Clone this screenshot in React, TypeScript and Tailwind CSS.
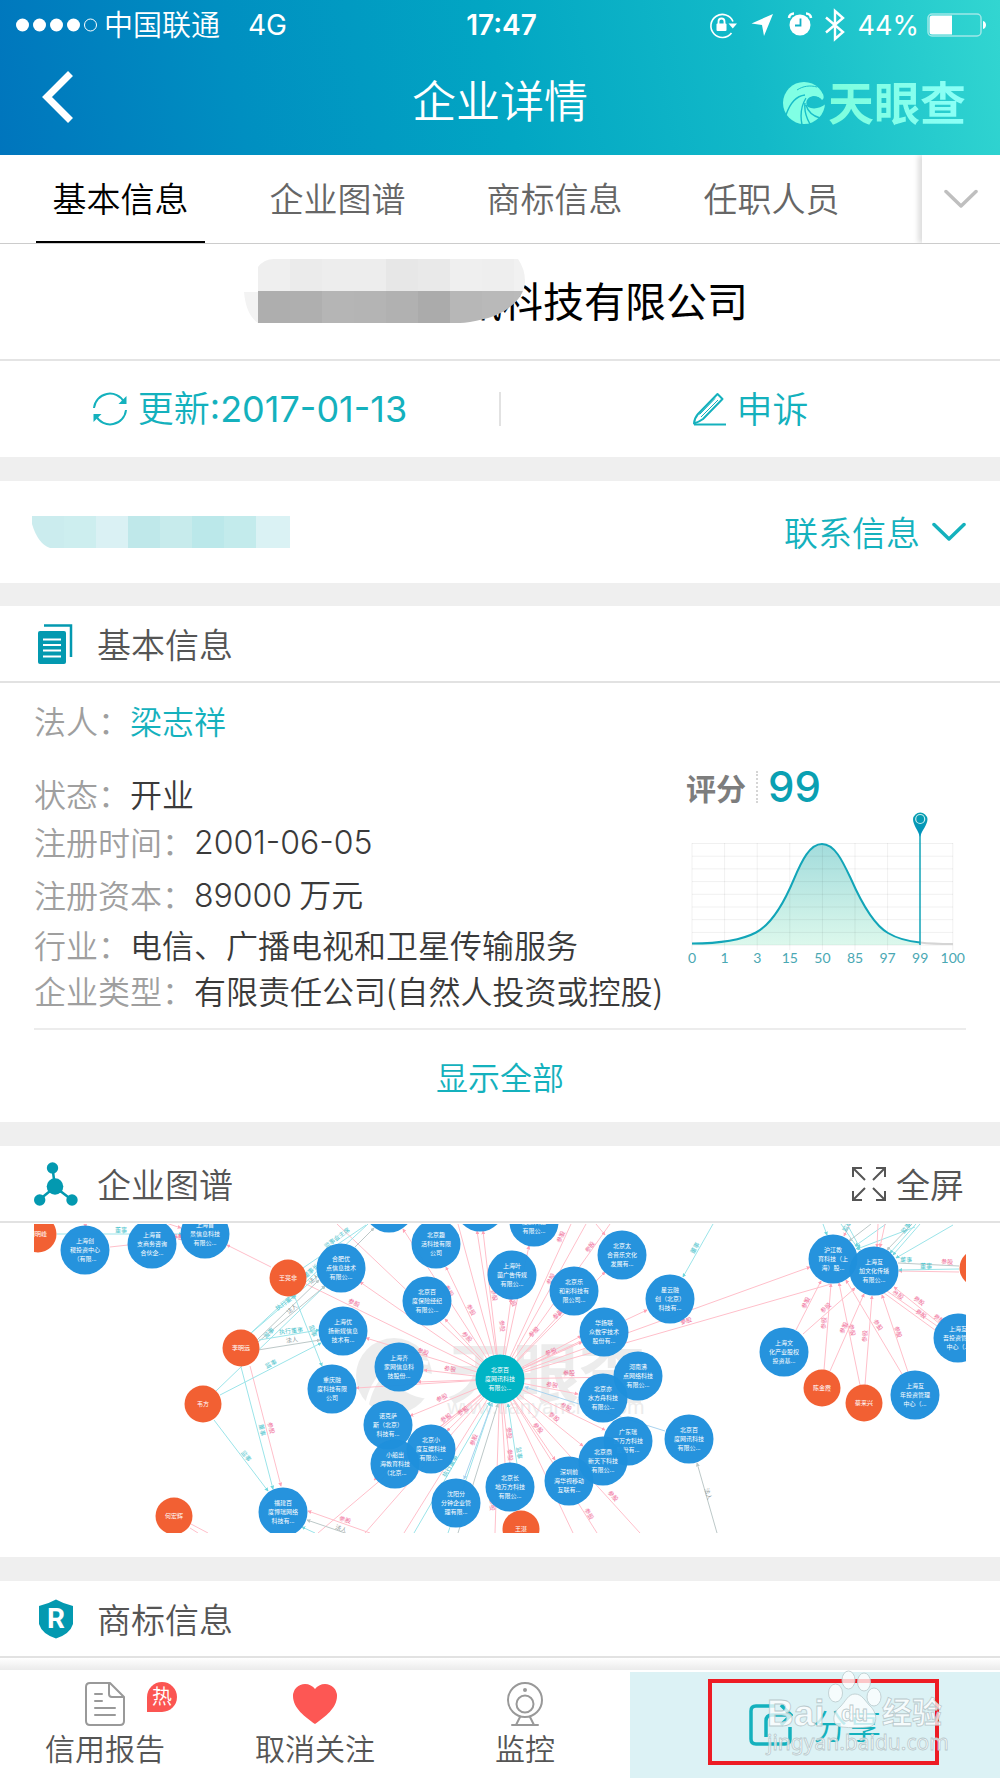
import React from "react";

type Tone = "pink" | "cyan" | "gray" | "blue";

const LINE: Record<Tone, string> = { pink: "#ffbfca", cyan: "#9be4e9", gray: "#bcc8c8", blue: "#a9d3ef" };
const LABEL: Record<Tone, string> = { pink: "#ef6c98", cyan: "#4cc4cd", gray: "#8f9b9b", blue: "#6fb1de" };

const companies: [number, number, string[]][] = [
  [85, 1251, ["上海创", "稷投资中心", "（有限..."]],
  [152, 1245, ["上海首", "支商务咨询", "合伙企..."]],
  [205, 1235, ["上海首", "景信息科技", "有限公..."]],
  [283, 1513, ["福建百", "度博瑞网络", "科技有..."]],
  [341, 1269, ["合肥优", "点信息技术", "有限公..."]],
  [343, 1332, ["上海优", "扬新媒信息", "技术有..."]],
  [332, 1390, ["重庆融", "度科技有限", "公司"]],
  [389, 1209, []],
  [436, 1245, ["北京趣", "活科技有限", "公司"]],
  [480, 1208, []],
  [534, 1223, ["", "度通科技", "有限公..."]],
  [512, 1276, ["上海叶", "菌广告传媒", "有限公..."]],
  [427, 1302, ["北京百", "度保险经纪", "有限公..."]],
  [574, 1292, ["北京乐", "和彩科技有", "限公司..."]],
  [622, 1256, ["北京太", "合音乐文化", "发展有..."]],
  [670, 1300, ["星云融", "创（北京）", "科技有..."]],
  [604, 1333, ["华扬联", "众数字技术", "股份有..."]],
  [399, 1368, ["上海齐", "家网信息科", "技股份..."]],
  [638, 1377, ["河南沸", "点网络科技", "有限公..."]],
  [603, 1399, ["北京亦", "水方舟科技", "有限公..."]],
  [388, 1426, ["诺克萨", "斯（北京）", "科技有..."]],
  [395, 1465, ["小船出", "海教育科技", "（北京..."]],
  [431, 1450, ["北京小", "度互娱科技", "有限公..."]],
  [456, 1504, ["沈阳分", "分钟企业管", "理有限..."]],
  [510, 1488, ["北京长", "地万方科技", "有限公..."]],
  [569, 1482, ["深圳前", "海华视移动", "互联有..."]],
  [628, 1442, ["广东瑞", "百万方科技", "股份有..."]],
  [603, 1462, ["北京鼎", "新天下科技", "有限公..."]],
  [689, 1440, ["北京百", "度网讯科技", "有限公..."]],
  [833, 1260, ["沪江教", "育科技（上", "海）股..."]],
  [874, 1272, ["上海互", "加文化传播", "有限公..."]],
  [784, 1353, ["上海文", "化产业股权", "投资基..."]],
  [915, 1396, ["上海互", "年投资管理", "中心（..."]],
  [958, 1339, ["上海互", "吾投资管理", "中心（..."]],
];

const people: [number, number, string][] = [
  [38, 1235, "胡明峰"],
  [288, 1279, "王亮非"],
  [241, 1349, "李明远"],
  [203, 1405, "韦方"],
  [174, 1517, "何宏辉"],
  [521, 1530, "王湛"],
  [822, 1389, "陈金霞"],
  [864, 1404, "蔡来兴"],
  [978, 1269, ""],
];

/* x1, y1, x2, y2, tone, arrow at the end */
const edges: [number, number, number, number, Tone, boolean][] = [
  [500, 1380, 360, 1283, "pink", true],
  [500, 1380, 403, 1230, "pink", true],
  [500, 1380, 337, 1225, "pink", false],
  [500, 1380, 446, 1268, "pink", true],
  [500, 1380, 445, 1320, "pink", true],
  [500, 1380, 458, 1225, "pink", false],
  [500, 1380, 477, 1232, "pink", true],
  [500, 1380, 483, 1232, "pink", true],
  [500, 1380, 529, 1247, "pink", true],
  [500, 1380, 511, 1300, "pink", true],
  [500, 1380, 571, 1225, "pink", false],
  [500, 1380, 586, 1225, "pink", false],
  [500, 1380, 610, 1225, "pink", false],
  [596, 1225, 605, 1236, "pink", true],
  [500, 1380, 605, 1273, "pink", true],
  [500, 1380, 561, 1314, "pink", true],
  [500, 1380, 582, 1343, "pink", true],
  [500, 1380, 581, 1337, "pink", true],
  [500, 1380, 647, 1311, "pink", true],
  [500, 1380, 810, 1268, "pink", true],
  [500, 1380, 831, 1285, "pink", false],
  [500, 1380, 366, 1339, "pink", true],
  [500, 1380, 304, 1284, "pink", false],
  [500, 1380, 424, 1371, "pink", true],
  [500, 1380, 418, 1383, "pink", true],
  [500, 1380, 356, 1389, "pink", true],
  [500, 1380, 410, 1417, "pink", true],
  [500, 1380, 447, 1432, "pink", true],
  [500, 1380, 437, 1430, "pink", false],
  [500, 1380, 374, 1481, "pink", true],
  [500, 1380, 318, 1534, "pink", false],
  [500, 1380, 365, 1534, "pink", false],
  [500, 1380, 404, 1534, "pink", false],
  [500, 1380, 495, 1534, "pink", false],
  [500, 1380, 505, 1464, "pink", false],
  [500, 1380, 510, 1464, "pink", false],
  [500, 1380, 555, 1461, "pink", true],
  [500, 1380, 573, 1534, "pink", false],
  [500, 1380, 597, 1534, "pink", false],
  [500, 1380, 640, 1534, "pink", false],
  [500, 1380, 583, 1447, "pink", true],
  [500, 1380, 605, 1431, "pink", true],
  [500, 1380, 578, 1395, "pink", true],
  [500, 1380, 616, 1378, "pink", false],
  [414, 1534, 490, 1403, "cyan", true],
  [448, 1534, 492, 1404, "cyan", true],
  [492, 1404, 464, 1480, "blue", true],
  [458, 1534, 498, 1405, "gray", true],
  [517, 1465, 508, 1405, "cyan", true],
  [665, 1432, 525, 1388, "blue", true],
  [57, 1235, 182, 1235, "cyan", true],
  [110, 1248, 128, 1246, "pink", false],
  [85, 1224, 86, 1228, "pink", true],
  [166, 1224, 181, 1229, "pink", true],
  [174, 1240, 182, 1236, "pink", true],
  [271, 1268, 227, 1246, "pink", true],
  [250, 1367, 281, 1487, "pink", true],
  [241, 1368, 273, 1490, "cyan", true],
  [214, 1421, 268, 1492, "cyan", true],
  [216, 1392, 325, 1287, "cyan", true],
  [220, 1396, 321, 1344, "cyan", true],
  [250, 1335, 320, 1275, "cyan", true],
  [252, 1333, 368, 1225, "cyan", false],
  [303, 1269, 366, 1226, "cyan", false],
  [257, 1341, 319, 1281, "gray", true],
  [258, 1343, 325, 1287, "gray", true],
  [258, 1351, 320, 1341, "gray", true],
  [259, 1341, 319, 1331, "cyan", true],
  [294, 1296, 322, 1367, "cyan", true],
  [355, 1248, 374, 1229, "gray", true],
  [191, 1525, 208, 1534, "pink", false],
  [190, 1529, 198, 1534, "pink", false],
  [370, 1534, 308, 1512, "pink", true],
  [345, 1534, 307, 1521, "gray", true],
  [315, 1534, 302, 1528, "cyan", true],
  [713, 1225, 683, 1278, "cyan", true],
  [796, 1331, 821, 1282, "pink", true],
  [803, 1335, 855, 1289, "pink", true],
  [824, 1371, 831, 1285, "pink", true],
  [830, 1372, 864, 1295, "pink", true],
  [860, 1386, 839, 1284, "pink", true],
  [865, 1386, 872, 1297, "pink", true],
  [908, 1373, 882, 1296, "pink", true],
  [902, 1375, 846, 1281, "pink", true],
  [940, 1325, 894, 1288, "pink", true],
  [937, 1327, 887, 1292, "pink", false],
  [935, 1331, 884, 1294, "pink", false],
  [959, 1273, 899, 1272, "pink", true],
  [959, 1267, 898, 1264, "gray", false],
  [959, 1270, 899, 1271, "cyan", true],
  [823, 1225, 827, 1236, "cyan", true],
  [841, 1225, 859, 1251, "cyan", true],
  [847, 1225, 860, 1249, "cyan", true],
  [850, 1225, 844, 1237, "pink", true],
  [871, 1225, 849, 1242, "gray", true],
  [886, 1225, 855, 1247, "cyan", true],
  [915, 1228, 857, 1250, "cyan", true],
  [878, 1225, 877, 1248, "pink", true],
  [885, 1225, 880, 1248, "pink", true],
  [912, 1225, 887, 1251, "gray", true],
  [916, 1225, 890, 1254, "cyan", true],
  [920, 1225, 893, 1256, "cyan", true],
  [953, 1226, 896, 1259, "cyan", true],
  [717, 1534, 697, 1464, "gray", true],
];

/* x, y, rotation, text, tone */
const labels: [number, number, number, string, Tone][] = [
  [354, 1304, 25, "参股", "pink"],
  [471, 1311, 60, "参股", "pink"],
  [467, 1338, 45, "参股", "pink"],
  [423, 1353, 20, "参股", "pink"],
  [450, 1370, 8, "参股", "pink"],
  [442, 1399, -25, "参股", "pink"],
  [446, 1419, -35, "参股", "pink"],
  [463, 1412, -35, "参股", "pink"],
  [474, 1441, -70, "参股", "pink"],
  [509, 1434, 86, "参股", "pink"],
  [510, 1456, 86, "参股", "pink"],
  [538, 1429, 50, "参股", "pink"],
  [554, 1418, 40, "参股", "pink"],
  [566, 1408, 28, "参股", "pink"],
  [552, 1386, 8, "参股", "pink"],
  [569, 1374, 0, "参股", "pink"],
  [551, 1353, -22, "参股", "pink"],
  [534, 1333, -45, "参股", "pink"],
  [558, 1315, -45, "参股", "pink"],
  [551, 1280, -62, "参股", "pink"],
  [561, 1238, -65, "参股", "pink"],
  [590, 1248, -55, "参股", "pink"],
  [502, 1327, 86, "参股", "pink"],
  [512, 1302, 60, "参股", "pink"],
  [494, 1296, 78, "参股", "pink"],
  [449, 1292, 60, "参股", "pink"],
  [613, 1497, 50, "参股", "pink"],
  [589, 1515, 60, "参股", "pink"],
  [492, 1506, 88, "参股", "pink"],
  [345, 1521, 15, "参股", "pink"],
  [341, 1530, 20, "法人", "gray"],
  [519, 1454, 82, "监事", "cyan"],
  [450, 1467, -60, "执行董事", "cyan"],
  [286, 1303, -37, "执行董事", "cyan"],
  [292, 1310, -40, "法人", "gray"],
  [269, 1334, -42, "监事", "cyan"],
  [291, 1332, -6, "执行董事", "cyan"],
  [292, 1341, -8, "法人", "gray"],
  [313, 1332, 70, "监事", "cyan"],
  [271, 1365, -27, "监事", "cyan"],
  [246, 1457, 53, "监事", "cyan"],
  [262, 1431, 78, "董事", "cyan"],
  [271, 1429, 76, "参股", "pink"],
  [121, 1231, 0, "董事", "cyan"],
  [178, 1238, 0, "参股", "pink"],
  [311, 1272, -42, "董事长", "cyan"],
  [314, 1280, -40, "法人", "gray"],
  [337, 1239, -37, "监事会主席", "cyan"],
  [695, 1249, -60, "董事", "cyan"],
  [686, 1322, -15, "参股", "pink"],
  [806, 1304, -65, "参股", "pink"],
  [826, 1309, -42, "参股", "pink"],
  [824, 1324, -86, "参股", "pink"],
  [844, 1329, -65, "参股", "pink"],
  [852, 1331, 78, "参股", "pink"],
  [865, 1337, -86, "参股", "pink"],
  [878, 1326, 58, "参股", "pink"],
  [898, 1333, 72, "参股", "pink"],
  [898, 1296, 33, "参股", "pink"],
  [919, 1302, 36, "参股", "pink"],
  [921, 1315, 36, "参股", "pink"],
  [939, 1320, 36, "参股", "pink"],
  [906, 1261, 2, "董事", "cyan"],
  [926, 1267, 0, "董事", "cyan"],
  [947, 1263, 2, "参股", "pink"],
  [906, 1229, -50, "监事", "cyan"],
  [847, 1227, -60, "监事", "cyan"],
  [708, 1495, 72, "法人", "gray"],
];

function NodeText({ x, y, lines }: { x: number; y: number; lines: string[] }) {
  return (
    <>
      {lines.map((t, i) => (
        <text key={i} x={x} y={y - 7 + i * 9.2} fontSize="6" fill="#fff" textAnchor="middle">
          {t}
        </text>
      ))}
    </>
  );
}

function RelationGraph() {
  return (
    <svg viewBox="34 1225 932 309" className="block w-full font-normal" role="img" aria-label="企业图谱">
      <defs>
        {(Object.keys(LINE) as Tone[]).map((t) => (
          <marker key={t} id={"arrow-" + t} viewBox="0 0 6 6" refX="5" refY="3" markerWidth="4" markerHeight="4" orient="auto">
            <path d="M0 0L6 3L0 6z" fill={t === "pink" ? "#ffa3b6" : t === "cyan" ? "#6fd6de" : LINE[t]} />
          </marker>
        ))}
        <mask id="swirl">
          <circle cx="394" cy="1377" r="38" fill="#fff" />
          <path d="M366 1410C372 1376 394 1356 428 1364" stroke="#000" strokeWidth="4" fill="none" />
          <path d="M397 1382C396 1368 408 1362 420 1372L436 1376L436 1400C416 1400 402 1394 397 1382z" fill="#000" />
        </mask>
      </defs>
      <g fill="#ececec">
        <rect x="354" y="1337" width="80" height="80" mask="url(#swirl)" />
        <text x="546" y="1399" fontSize="66" fontWeight="700" textAnchor="middle">天眼查</text>
        <text x="546" y="1415" fontSize="21" fontFamily="Liberation Sans, sans-serif" textAnchor="middle">www.tianyancha.com</text>
      </g>
      {edges.map(([x1, y1, x2, y2, tone, arrow], i) => (
        <line key={i} x1={x1} y1={y1} x2={x2} y2={y2} stroke={LINE[tone]} strokeWidth="1" markerEnd={arrow ? `url(#arrow-${tone})` : undefined} />
      ))}
      {labels.map(([x, y, r, t, tone], i) => (
        <text key={i} x={x} y={y + 2} fontSize="6" fill={LABEL[tone]} textAnchor="middle" transform={`rotate(${r} ${x} ${y})`}>
          {t}
        </text>
      ))}
      {companies.map(([x, y, lines], i) => (
        <g key={i}>
          <circle cx={x} cy={y} r="24.5" fill="#1f90dc" fillOpacity="0.97" />
          <NodeText x={x} y={y} lines={lines} />
        </g>
      ))}
      {people.map(([x, y, name], i) => (
        <g key={i}>
          <circle cx={x} cy={y} r="18.5" fill="#f26033" />
          <text x={x} y={y + 2} fontSize="6" fill="#fff" textAnchor="middle">{name}</text>
        </g>
      ))}
      <circle cx="500" cy="1380" r="24.5" fill="#00b4c5" />
      <NodeText x={500} y={1380} lines={["北京百", "度网讯科技", "有限公..."]} />
    </svg>
  );
}

function ScoreChart() {
  const ticks = ["0", "1", "3", "15", "50", "85", "97", "99", "100"];
  const curve =
    "M2 140.500C24 140.500 48 139 66 129.500C82 121 94 100 104 76C112 57 120 41 132 41C145 41 153 59 161 76C172 101 184 122 198 130C208 136 220 138.500 230 139.500";
  return (
    <svg viewBox="-4 0 280 166" className="block w-full overflow-visible" role="img" aria-label="评分分布">
      <defs>
        <linearGradient id="bell" x1="0" y1="0" x2="0" y2="1">
          <stop offset="0" stopColor="#a3dcdc" />
          <stop offset="1" stopColor="#dcf8ec" />
        </linearGradient>
        <linearGradient id="pin" x1="0" y1="0" x2="0" y2="1">
          <stop offset="0" stopColor="#0a9fb0" />
          <stop offset="1" stopColor="#0091bd" />
        </linearGradient>
      </defs>
      <path d={curve + "L230 142L2 142z"} fill="url(#bell)" />
      <g stroke="#000" strokeOpacity="0.06" strokeWidth="1">
        {ticks.map((_, i) => (
          <line key={i} x1={2 + i * 32.6} x2={2 + i * 32.6} y1="40" y2="147" />
        ))}
        {ticks.map((_, i) => (
          <line key={i} x1="2" x2="263" y1={40.5 + i * 12.7} y2={40.5 + i * 12.7} />
        ))}
      </g>
      <path d="M230 139.500C242 141 252 141 263 141" stroke="#d5d5d5" strokeWidth="2" fill="none" />
      <path d={curve} stroke="#12a5b8" strokeWidth="2" fill="none" />
      <line x1="230" x2="230" y1="30" y2="142" stroke="#12a5b8" strokeWidth="1.500" />
      <path d="M230 34C228 27 223 22 223 16A7.300 7.300 0 0 1 237.500 16C237.500 22 232 27 230 34z" fill="url(#pin)" />
      <circle cx="230.200" cy="16" r="4.500" fill="none" stroke="#c9edf0" strokeWidth="1.200" />
      <g fill="#4aa8b3" fontSize="14" fontWeight="400" fontFamily="Lato, sans-serif" textAnchor="middle">
        {ticks.map((t, i) => (
          <text key={t} x={2 + i * 32.6} y="160">{t}</text>
        ))}
      </g>
    </svg>
  );
}

function Chevron({ color }: { color: string }) {
  return (
    <svg viewBox="0 0 34 20" className="h-5 w-[34px] shrink-0" fill="none" stroke={color} strokeWidth="3.500" strokeLinecap="round" strokeLinejoin="round" aria-hidden="true">
      <path d="M2 2.500L17 17L32 2.500" />
    </svg>
  );
}

function StatusBar() {
  return (
    <div className="flex h-[50px] items-center pl-4 pr-[13px] text-[28px] leading-none [font-family:Inter,'Noto_Sans_CJK_SC',sans-serif]">
      <div className="flex flex-1 items-center">
        <svg viewBox="0 0 82 16" className="h-4 w-[82px]" fill="#fff" aria-hidden="true">
          <circle cx="6.500" cy="8" r="6.500" />
          <circle cx="23.500" cy="8" r="6.500" />
          <circle cx="40.500" cy="8" r="6.500" />
          <circle cx="57.500" cy="8" r="6.500" />
          <circle cx="74.500" cy="8" r="6" fill="none" stroke="#fff" strokeWidth="1" />
        </svg>
        <span className="ml-1.5 text-[29px] [font-weight:350]">中国联通</span>
        <span className="ml-7">4G</span>
      </div>
      <span className="font-semibold">17:47</span>
      <div className="flex flex-1 items-center justify-end">
        <svg viewBox="0 0 138 34" className="mr-3 h-[34px] w-[138px]" fill="#fff" aria-hidden="true">
          <path d="M23.500 25A11.500 11.500 0 1 1 25 13.500" fill="none" stroke="#fff" strokeWidth="1.600" />
          <path d="M20.500 15.500h8.500l-4.200 5z" />
          <rect x="8.500" y="15.500" width="10" height="7.500" rx="1" />
          <path d="M10.500 16v-2.500a3 3 0 0 1 6 0V16" fill="none" stroke="#fff" strokeWidth="1.800" />
          <path d="M65 6L56 28L54 17L43.500 15.500z" />
          <circle cx="92" cy="17" r="10.500" />
          <path d="M92.500 10.500v7h-5.500" fill="none" stroke="#12b0c5" strokeWidth="1.800" />
          <path d="M81 10a5 5 0 0 1 5-4.500M103 10a5 5 0 0 0-5-4.500" fill="none" stroke="#fff" strokeWidth="2.600" />
          <path d="M118 9.500L135 24L127 31V3L135 10L118 24.500" fill="none" stroke="#fff" strokeWidth="2.400" />
        </svg>
        <span className="mr-2 text-[27px]">44%</span>
        <svg viewBox="0 0 60 24" className="h-6 w-[60px]" aria-hidden="true">
          <rect x="1" y="1" width="53" height="22" rx="4" fill="none" stroke="#9fe8e8" strokeWidth="1.500" />
          <path d="M5 2.500h20v19H5a2.500 2.500 0 0 1-2.500-2.500V5A2.500 2.500 0 0 1 5 2.500z" fill="#fff" />
          <path d="M56 8c4 1 4 7 0 8z" fill="#fff" />
        </svg>
      </div>
    </div>
  );
}

function Brand() {
  return (
    <div className="flex items-center justify-end gap-0.5 text-[#80ffe4]">
      <svg viewBox="0 0 44 44" className="h-11 w-11" aria-hidden="true">
        <defs>
          <mask id="brand">
            <circle cx="22" cy="22" r="21" fill="#fff" />
            <path d="M4 34C8 22 14 15 23 14" stroke="#000" strokeWidth="1.400" fill="none" />
            <path d="M15 9C21 5 28 4 35 6" stroke="#000" strokeWidth="1" fill="none" />
            <path d="M25 19C29 13 36 14 40 18L40 8L46 8V21C40 27 32 29 26 26C24 24 24 21 25 19z" fill="#000" />
            <path d="M20 44C18 34 19 25 24 17M28 43C24 36 22 30 23 22M38 37C31 35 26 31 24 24" stroke="#000" strokeWidth="1.400" fill="none" />
          </mask>
        </defs>
        <rect width="44" height="44" fill="currentColor" mask="url(#brand)" />
        <path d="M24 18C28 8 38 8 41 13C42 16 42 18 40 19C37 15 30 13 24 18z" fill="currentColor" />
      </svg>
      <span className="bg-linear-to-r from-[#7dfedc] to-[#8cfff8] bg-clip-text pb-1.5 text-[46px] font-bold leading-none text-transparent">天眼查</span>
    </div>
  );
}

function SectionHeader({ icon, title, children }: { icon: React.ReactNode; title: string; children?: React.ReactNode }) {
  return (
    <div className="flex h-[77px] items-center border-b-2 border-[#e2e2e2] pl-[34px] pr-9">
      <span className="flex w-[63px]">{icon}</span>
      <h2 className="flex-1 text-[34px] leading-none text-[#555]">{title}</h2>
      {children}
    </div>
  );
}

function Mosaic({ rows, width, offset, clip, className }: { rows: string[][]; width: number; offset: number; clip: string; className: string }) {
  return (
    <svg className={className} viewBox={`${offset} 0 ${width} ${rows.length * 32}`} aria-hidden="true" style={{ clipPath: clip }} shapeRendering="crispEdges">
      {rows.map((r, j) => r.map((c, i) => <rect key={i + "-" + j} x={i * 32} y={j * 32} width="32" height="32" fill={c} />))}
    </svg>
  );
}

const info: [string, string, string][] = [
  ["状态：", "开业", "h-12"],
  ["注册时间：", "2001-06-05", "h-12"],
  ["注册资本：", "89000 万元", "h-[58px]"],
  ["行业：", "电信、广播电视和卫星传输服务", "h-[42px]"],
  ["企业类型：", "有限责任公司(自然人投资或控股)", "h-[50px]"],
];

const tabs = ["基本信息", "企业图谱", "商标信息", "任职人员"];

export default function App() {
  return (
    <div className="flex min-h-screen flex-col bg-[#efefef] [font-family:'Noto_Sans_CJK_SC',sans-serif] [font-weight:350]">
      <header className="h-[155px] bg-[linear-gradient(78deg,#0075bd_0%,#008fc1_24%,#02a6c3_50%,#12b9c8_74%,#32d6d1_100%)] font-normal text-white">
        <StatusBar />
        <div className="grid h-[105px] grid-cols-[1fr_auto_1fr] items-center px-[34px]">
          <button type="button" aria-label="返回" className="ml-2 w-8">
            <svg viewBox="0 0 32 52" className="-mt-3 h-[52px] w-8" fill="none" stroke="#fff" strokeWidth="7" aria-hidden="true">
              <path d="M28.500 2.500L5 26L28.500 49.500" />
            </svg>
          </button>
          <h1 className="pb-2 text-[44px] leading-none [font-weight:350]">企业详情</h1>
          <Brand />
        </div>
      </header>

      <nav className="flex h-[89px] border-b border-[#ccc] bg-white">
        <div className="flex flex-1 pl-3 pr-[42px]">
          {tabs.map((t, i) => (
            <button
              key={t}
              type="button"
              className={
                i === 0
                  ? "mx-6 flex-1 whitespace-nowrap border-b-2 border-black text-[34px] leading-none text-black"
                  : "mx-6 flex-1 whitespace-nowrap border-b-2 border-transparent text-[34px] leading-none text-[#666]"
              }
            >
              {t}
            </button>
          ))}
        </div>
        <button type="button" aria-label="更多" className="flex w-[78px] items-center justify-center shadow-[-4px_0_5px_rgba(0,0,0,0.13)] [clip-path:inset(0_0_0_-10px)]">
          <Chevron color="#bfbfbf" />
        </button>
      </nav>

      <section className="bg-white">
        <div className="flex h-[117px] items-center justify-center border-b-2 border-[#e4e4e4]">
          <div className="relative flex w-[512px] justify-end pb-1 pr-2">
            <span className="text-[41px] font-normal leading-none text-black">讯科技有限公司</span>
            <Mosaic
              className="absolute -top-5 left-0 h-16 w-[281px]"
              width={281}
              offset={18}
              clip="path('M0 33H14V8Q20 0 30 0H274Q281 10 281 22C281 42 258 56 240 60Q224 64 216 64H14Q2 56 0 33Z')"
              rows={[
                ["#ffffff", "#efefef", "#ebebeb", "#ededed", "#ededed", "#e7e7e7", "#e9e9e9", "#efefef", "#eeeeee", "#f1f1f1"],
                ["#f3f3f3", "#aeaeae", "#afafaf", "#b5b5b5", "#b4b4b4", "#b1b1b1", "#ababab", "#b7b7b7", "#b9b9b9", "#bababa"],
              ]}
            />
          </div>
        </div>
        <div className="flex h-24 items-center text-4xl leading-none text-[#14b1bd]">
          <button type="button" className="flex flex-1 items-center justify-center gap-2.5">
            <svg viewBox="0 0 36 36" className="h-9 w-9" fill="none" stroke="currentColor" strokeWidth="2" aria-hidden="true">
              <path d="M2 17A16 16 0 0 1 32 11M34 19A16 16 0 0 1 4 25" />
              <path d="M34.500 5v8h-8zM1.500 31v-8h8z" fill="currentColor" stroke="none" />
            </svg>
            <span className="pb-1">
              更新<span className="font-normal [font-family:Inter,sans-serif]">:2017-01-13</span>
            </span>
          </button>
          <span className="h-[34px] w-0.5 bg-[#e2e2e2]" />
          <button type="button" className="flex flex-1 items-center justify-center gap-2.5">
            <svg viewBox="0 0 34 34" className="h-[34px] w-[34px]" fill="none" stroke="currentColor" strokeWidth="2" strokeLinejoin="round" aria-hidden="true">
              <path d="M25.500 2L30.500 7L11 27Q7 30 2 31.500Q2.500 26 6 22z" />
              <path d="M26 8L9 25M23 6.500L7.500 22.500" strokeWidth="1" />
              <path d="M2 32.500H34" />
            </svg>
            <span className="pb-1">申诉</span>
          </button>
        </div>
      </section>

      <section className="mt-6 flex h-[102px] items-center justify-between bg-white pl-8 pr-[34px]">
        <Mosaic
          className="h-8 w-[258px]"
          width={258}
          offset={0}
          clip="path('M0 0H258V32H18Q6 28 0 8Z')"
          rows={[["#cbecee", "#cdeeef", "#daf1f4", "#bfe8ea", "#c7ebec", "#bbe8ea", "#c3ebec", "#daf2f4", "#daf2f4"]]}
        />
        <button type="button" className="flex items-center gap-3 text-[34px] leading-none text-[#14b1bd]">
          联系信息
          <Chevron color="#14b1bd" />
        </button>
      </section>

      <section className="mt-[23px] bg-white">
        <SectionHeader
          title="基本信息"
          icon={
            <svg viewBox="0 0 42 40" className="h-10 w-[42px]" aria-hidden="true">
              <path d="M10 1.500H37V33" fill="none" stroke="#0399b0" strokeWidth="2.500" />
              <rect x="4" y="7" width="28" height="33" rx="2" fill="#0399b0" />
              <path d="M9 15.500H27M9 21H27M9 26.500H27M9 32.500H27" stroke="#fff" strokeWidth="2" />
            </svg>
          }
        />
        <div className="px-[34px]">
          <div className="flex items-start border-b-2 border-[#ececec] pb-[13px] text-[32px] leading-none text-[#3a3a3a]">
            <dl className="flex-1 whitespace-nowrap">
              <div className="mb-3 flex h-[74px] items-center">
                <dt className="text-[#9f9f9f]">法人：</dt>
                <dd>
                  <a href="#legal-person" className="text-[#14b1bd]">梁志祥</a>
                </dd>
              </div>
              {info.map(([label, value, height]) => (
                <div key={label} className={"flex items-center " + height}>
                  <dt className="text-[#9f9f9f]">{label}</dt>
                  <dd>
                    {value.split(/([0-9-]+)/).map((part, i) =>
                      i % 2 ? (
                        <span key={i} className="[font-family:Inter,sans-serif]">{part}</span>
                      ) : (
                        part
                      ),
                    )}
                  </dd>
                </div>
              ))}
            </dl>
            <div className="-ml-5 mt-[84px] w-[280px] shrink-0">
              <div className="-mb-1 flex h-10 items-center">
                <span className="text-[30px] font-bold text-[#7d7d7d]">评分</span>
                <span className="mx-2.5 h-8 border-l-2 border-dotted border-[#d5d5d5]" />
                <span className="text-[42px] font-medium text-[#0aa0b2] [font-family:Inter,sans-serif]">99</span>
              </div>
              <ScoreChart />
            </div>
          </div>
          <button type="button" className="flex h-[92px] w-full items-center justify-center text-[32px] leading-none text-[#14b1bd]">
            显示全部
          </button>
        </div>
      </section>

      <section className="mt-6 bg-white pb-6">
        <SectionHeader
          title="企业图谱"
          icon={
            <svg viewBox="0 0 44 44" className="h-11 w-11" fill="#0399b0" aria-hidden="true">
              <path d="M18.500 6L21 25L5 38M21 25L38 38" fill="none" stroke="#0399b0" strokeWidth="2.500" />
              <circle cx="18.500" cy="6" r="5.700" />
              <circle cx="21" cy="24.500" r="8.300" />
              <circle cx="5.700" cy="38" r="5.700" />
              <circle cx="38" cy="38" r="5.700" />
            </svg>
          }
        >
          <button type="button" className="flex items-center gap-2.5 text-[34px] leading-none text-[#555]">
            <svg viewBox="0 0 34 34" className="h-[34px] w-[34px]" fill="none" stroke="currentColor" strokeWidth="2" aria-hidden="true">
              <path d="M1 10V1H10M1 1L13 13M24 1H33V10M33 1L21 13M1 24V33H10M1 33L13 21M24 33H33V24M33 33L21 21" />
            </svg>
            全屏
          </button>
        </SectionHeader>
        <div className="px-[34px] pt-px">
          <RelationGraph />
        </div>
      </section>

      <section className="mt-6 flex-1 bg-white">
        <SectionHeader
          title="商标信息"
          icon={
            <span className="relative ml-1 flex h-10 w-9 items-center justify-center">
              <svg viewBox="0 0 36 40" className="absolute inset-0 h-10 w-9" fill="#0399b0" aria-hidden="true">
                <path d="M18 .5Q26 5 35 7V25Q32 35 18 39.500Q4 35 1 25V7Q10 5 18 .5z" />
              </svg>
              <span className="relative text-[28px] font-bold leading-none text-white [font-family:Roboto,sans-serif]">R</span>
            </span>
          }
        />
        <div className="h-3 bg-linear-to-b from-white to-[#ebebeb]" />
      </section>

      <footer className="sticky bottom-0 flex h-[106px] bg-white text-[#555]">
        <div className="grid w-[63%] grid-cols-3 text-[30px] leading-none">
          <button type="button" className="relative flex flex-col items-center pt-2.5">
            <svg viewBox="0 0 40 44" className="h-11 w-10" fill="none" stroke="#999" strokeWidth="2" strokeLinecap="round" strokeLinejoin="round" aria-hidden="true">
              <path d="M5 1H25L39 15V39Q39 43 35 43H5Q1 43 1 39V5Q1 1 5 1zM24 1V12Q24 15 27 15H38M10 12H17M10 19H17M10 26H30M10 33H30" />
            </svg>
            <span className="mt-1.5">信用报告</span>
            <span className="absolute left-[70%] top-2.5 flex h-[30px] w-[30px] items-center justify-center rounded-full rounded-bl-none bg-[#fb5552] pb-0.5 text-xl leading-none text-white">热</span>
          </button>
          <button type="button" className="flex flex-col items-center pt-2.5">
            <svg viewBox="0 0 44 44" className="h-11 w-11" fill="#fd5754" aria-hidden="true">
              <path d="M22 42C12 35 0 26 0 14A12 12 0 0 1 12 2C16 2 20 4 22 7C24 4 28 2 32 2A12 12 0 0 1 44 14C44 26 32 35 22 42z" />
            </svg>
            <span className="mt-1.5">取消关注</span>
          </button>
          <button type="button" className="flex flex-col items-center pt-2.5">
            <svg viewBox="0 0 38 44" className="h-11 w-[38px]" fill="none" stroke="#999" strokeWidth="2" strokeLinecap="round" aria-hidden="true">
              <circle cx="19" cy="18" r="17" />
              <circle cx="19" cy="22" r="8.500" />
              <circle cx="19" cy="8" r="1" fill="#999" />
              <path d="M14 35L10 43M24 35L28 43M6 43H32" />
            </svg>
            <span className="mt-1.5">监控</span>
          </button>
        </div>
        <div className="relative flex flex-1 items-center justify-center bg-[#dcf2f5]">
          <button type="button" className="flex items-center gap-5 text-[34px] leading-none text-[#14b1bd]">
            <svg viewBox="0 0 44 44" className="h-11 w-11" fill="none" stroke="currentColor" strokeWidth="3.500" aria-hidden="true">
              <path d="M26 3H7Q2 3 2 8V36Q2 41 7 41H36Q41 41 41 36V24" />
              <path d="M17 34V18Q17 12 23 12H41M32 2L42 12L32 22" />
            </svg>
            分享
          </button>
          <div className="absolute left-[78px] top-[7px] h-[86px] w-[231px] border-4 border-[#ed1c24]" />
          <svg viewBox="764 1668 184 90" className="pointer-events-none absolute -top-1 left-[134px] h-[90px] w-[184px]" fill="#fff" fillOpacity="0.75" stroke="#b9c9cc" strokeWidth="0.800" aria-hidden="true">
            <ellipse cx="835.500" cy="1693" rx="7" ry="9" />
            <ellipse cx="848.500" cy="1680" rx="6.500" ry="9" />
            <ellipse cx="864" cy="1682" rx="6.500" ry="9" />
            <ellipse cx="874" cy="1697" rx="7" ry="9" />
            <path d="M855 1694C862 1694 865 1701 870 1706C877 1712 879 1726 868 1727C860 1728 850 1728 842 1727C831 1726 832 1713 840 1707C846 1701 848 1694 855 1694z" />
            <text x="767" y="1726" fontSize="37" fontWeight="700" fontFamily="Liberation Sans, sans-serif">Bai</text>
            <text x="841" y="1721" fontSize="22" fontWeight="700" fontFamily="Liberation Sans, sans-serif">du</text>
            <text x="882" y="1723" fontSize="30" fontWeight="700">经验</text>
            <text x="767" y="1750" fontSize="21" fontWeight="400" fontFamily="Noto Sans, sans-serif">jingyan.baidu.com</text>
          </svg>
        </div>
      </footer>
    </div>
  );
}
